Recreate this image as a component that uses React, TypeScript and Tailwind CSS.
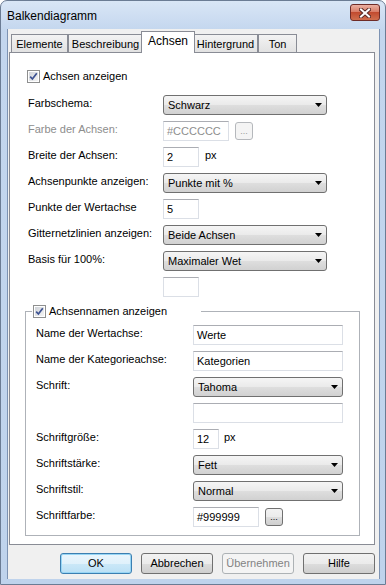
import type { ReactNode } from 'react';

const TABS = [
  { label: 'Elemente', w: 'w-[57px]' },
  { label: 'Beschreibung', w: 'w-[75px]' },
  { label: 'Achsen', w: 'w-[50px]', active: true },
  { label: 'Hintergrund', w: 'w-[65px]' },
  { label: 'Ton', w: 'w-[39px]' },
];

function CheckBox() {
  return (
    <span className="flex h-[13px] w-[13px] shrink-0 items-center justify-center border border-[#8e8f8f] bg-white p-px">
      <span className="flex h-full w-full items-center justify-center bg-[linear-gradient(135deg,#cfd3d9,#f4f4f4)]">
        <svg width="9" height="9" viewBox="0 0 9 9">
          <path d="M1.2 4.6 L3.4 7 L7.8 1.2" fill="none" stroke="#3d5292" strokeWidth="1.7" />
        </svg>
      </span>
    </span>
  );
}

function Combo({ value, w }: { value: string; w: string }) {
  return (
    <div
      className={`flex h-[20px] ${w} items-center justify-between rounded-[3px] border border-[#707070] bg-[linear-gradient(#f5f5f5_0%,#eaeaea_50%,#dedede_51%,#d1d1d1_100%)] pl-[4px] pr-[4px]`}
    >
      <span>{value}</span>
      <svg width="7" height="4" viewBox="0 0 7 4">
        <path d="M0 0H7L3.5 4Z" fill="#000" />
      </svg>
    </div>
  );
}

function TextBox({ value = '', w, disabled }: { value?: string; w: string; disabled?: boolean }) {
  return (
    <div
      className={`flex h-[20px] ${w} items-center border border-[#dbdfe6] border-t-[#abadb3] bg-white pl-[3px] ${
        disabled ? 'text-[#8d8d8d]' : 'text-black'
      }`}
    >
      {value}
    </div>
  );
}

function DotsButton({ disabled }: { disabled?: boolean }) {
  return (
    <div
      className={`flex h-[18px] w-[18px] items-end justify-center rounded-[3px] border pb-[3px] text-[9px] leading-none ${
        disabled
          ? 'border-[#b5b8bc] bg-[#f4f4f4] text-[#9a9a9a]'
          : 'border-[#707070] bg-[linear-gradient(#f2f2f2_0%,#ebebeb_50%,#dddddd_51%,#cfcfcf_100%)] text-black'
      }`}
    >
      ...
    </div>
  );
}

function Row({ label, lw, dim, children }: { label: string; lw: string; dim?: boolean; children: ReactNode }) {
  return (
    <div className="flex h-[20px] items-center">
      <span className={`${lw} -mt-[3px] shrink-0 ${dim ? 'text-[#8d8d8d]' : 'text-black'}`}>{label}</span>
      {children}
    </div>
  );
}

function DialogButton({ label, isDefault, disabled }: { label: string; isDefault?: boolean; disabled?: boolean }) {
  let cls = 'border-[#707070] bg-[linear-gradient(#f2f2f2_0%,#ebebeb_50%,#dddddd_51%,#cfcfcf_100%)] text-black';
  if (isDefault)
    cls =
      'border-[#3c7fb1] bg-[linear-gradient(#eaf6fd_0%,#e0f1fb_50%,#cbe8f8_51%,#bbe0f5_100%)] text-black shadow-[inset_0_0_0_1px_#98d6f5]';
  if (disabled) cls = 'border-[#adb2b5] bg-[#f4f4f4] text-[#838383]';
  return (
    <div className={`flex h-[21px] w-[72px] items-center justify-center rounded-[3px] border ${cls}`}>{label}</div>
  );
}

export default function App() {
  return (
    <div className="flex h-[585px] w-[386px] flex-col overflow-hidden rounded-t-[7px] border border-[#6b7c94] bg-[linear-gradient(#d9e6f6_0px,#c3d6ee_30px,#bfd3ec_100%)] font-['Liberation_Sans',Arial,sans-serif] text-[11px] text-black">
      {/* title bar */}
      <div className="flex h-[28px] shrink-0 items-start justify-between">
        <span className="mt-[6px] pl-[6px] text-[12px]">Balkendiagramm</span>
        <div className="mr-[5px] mt-[3px] flex h-[17px] w-[30px] items-center justify-center rounded-[3px] border border-[#6e2b27] bg-[linear-gradient(#eab0a2_0%,#d97d68_45%,#c24b30_50%,#d06f4e_100%)]">
          <svg width="12" height="10" viewBox="0 0 12 10">
            <path d="M2 1.5 L10 8.5 M10 1.5 L2 8.5" stroke="#5a2a26" strokeWidth="4" strokeLinecap="square" />
            <path d="M2 1.5 L10 8.5 M10 1.5 L2 8.5" stroke="#ffffff" strokeWidth="2" strokeLinecap="square" />
          </svg>
        </div>
      </div>

      {/* client area */}
      <div className="ml-[6px] flex h-[550px] w-[373px] shrink-0 flex-col border-l border-r border-[#7d93b3] bg-[#f0f0f0] pt-[2px]">
        {/* tabs */}
        <div className="ml-[3px] flex h-[21px] items-end">
          {TABS.map((t) =>
            t.active ? (
              <div
                key={t.label}
                className="relative z-10 -mx-[2px] -mb-px flex h-[22px] w-[54px] items-center justify-center border border-b-0 border-[#898c95] bg-white pb-[3px] text-[12px]"
              >
                {t.label}
              </div>
            ) : (
              <div
                key={t.label}
                className={`flex h-[18px] ${t.w} items-center justify-center border border-b-0 border-[#898c95] bg-[linear-gradient(#f3f3f3,#e2e2e2)] pt-px`}
              >
                {t.label}
              </div>
            )
          )}
        </div>

        {/* tab panel */}
        <div className="ml-px flex h-[493px] w-[366px] flex-col border border-[#898c95] bg-white">
          <div className="ml-[17px] mt-[17px] flex h-[13px] items-center gap-[3px]">
            <CheckBox />
            <span>Achsen anzeigen</span>
          </div>

          <div className="ml-[18px] mt-[12px] flex flex-col gap-[6px]">
            <Row label="Farbschema:" lw="w-[135px]">
              <Combo value="Schwarz" w="w-[164px]" />
            </Row>
            <Row label="Farbe der Achsen:" lw="w-[135px]" dim>
              <TextBox value="#CCCCCC" w="w-[66px]" disabled />
              <div className="ml-[6px]">
                <DotsButton disabled />
              </div>
            </Row>
            <Row label="Breite der Achsen:" lw="w-[135px]">
              <TextBox value="2" w="w-[36px]" />
              <span className="ml-[6px] -mt-[3px]">px</span>
            </Row>
            <Row label="Achsenpunkte anzeigen:" lw="w-[135px]">
              <Combo value="Punkte mit %" w="w-[164px]" />
            </Row>
            <Row label="Punkte der Wertachse" lw="w-[135px]">
              <TextBox value="5" w="w-[36px]" />
            </Row>
            <Row label="Gitternetzlinien anzeigen:" lw="w-[135px]">
              <Combo value="Beide Achsen" w="w-[164px]" />
            </Row>
            <Row label="Basis für 100%:" lw="w-[135px]">
              <Combo value="Maximaler Wet" w="w-[164px]" />
            </Row>
            <Row label="" lw="w-[135px]">
              <TextBox w="w-[36px]" />
            </Row>
          </div>

          {/* group box */}
          <div className="relative ml-[15px] mt-[14px] h-[225px] w-[335px] border border-[#aeb2b8]">
            <div className="absolute -top-[8px] left-[6px] flex h-[15px] w-[169px] items-center gap-[3px] bg-white pl-px">
              <CheckBox />
              <span>Achsennamen anzeigen</span>
            </div>
            <div className="ml-[10px] mt-[13px] flex flex-col gap-[6px]">
              <Row label="Name der Wertachse:" lw="w-[157px]">
                <TextBox value="Werte" w="w-[150px]" />
              </Row>
              <Row label="Name der Kategorieachse:" lw="w-[157px]">
                <TextBox value="Kategorien" w="w-[150px]" />
              </Row>
              <Row label="Schrift:" lw="w-[157px]">
                <Combo value="Tahoma" w="w-[150px]" />
              </Row>
              <Row label="" lw="w-[157px]">
                <TextBox w="w-[150px]" />
              </Row>
              <Row label="Schriftgröße:" lw="w-[157px]">
                <TextBox value="12" w="w-[26px]" />
                <span className="ml-[5px] -mt-[3px]">px</span>
              </Row>
              <Row label="Schriftstärke:" lw="w-[157px]">
                <Combo value="Fett" w="w-[150px]" />
              </Row>
              <Row label="Schriftstil:" lw="w-[157px]">
                <Combo value="Normal" w="w-[150px]" />
              </Row>
              <Row label="Schriftfarbe:" lw="w-[157px]">
                <TextBox value="#999999" w="w-[66px]" />
                <div className="ml-[6px]">
                  <DotsButton />
                </div>
              </Row>
            </div>
          </div>
        </div>

        {/* buttons */}
        <div className="mr-[4px] mt-[8px] flex justify-end gap-[9px]">
          <DialogButton label="OK" isDefault />
          <DialogButton label="Abbrechen" />
          <DialogButton label="Übernehmen" disabled />
          <DialogButton label="Hilfe" />
        </div>
      </div>
    </div>
  );
}
